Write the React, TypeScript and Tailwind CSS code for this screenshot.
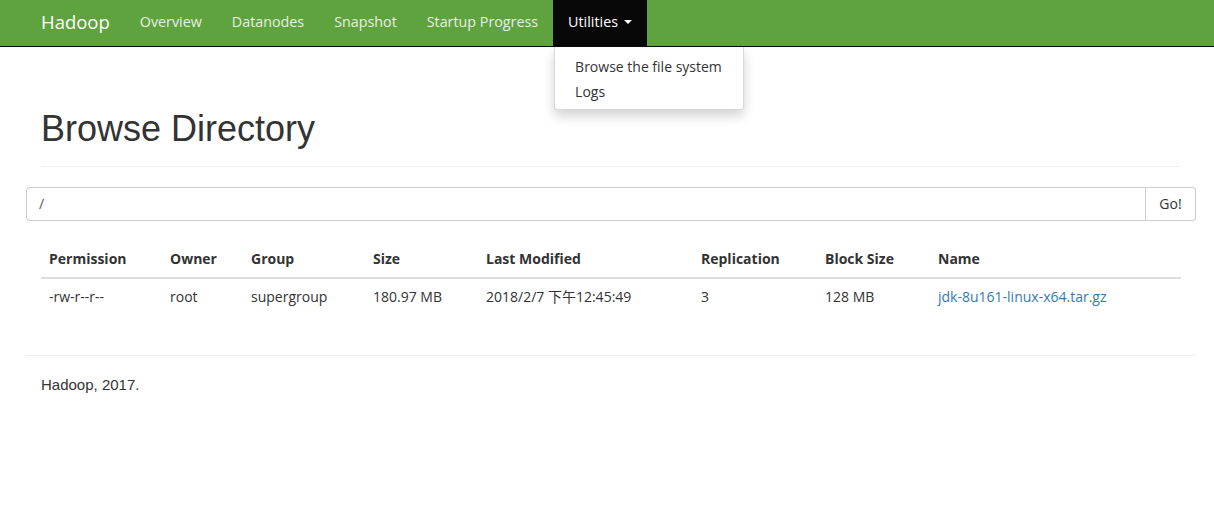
import React from "react";

export default function App() {
  const navItems = ["Overview", "Datanodes", "Snapshot", "Startup Progress"];
  return (
    <div className="min-h-[510px] bg-white text-[#333] text-[14px] leading-[20px] font-['Open_Sans','Noto_Sans_CJK_SC',sans-serif]">
      {/* Navbar */}
      <div className="h-[47px] bg-[#5fa33e] border-b border-[#080808]">
        <div className="w-[1170px] ml-[26px] flex h-[46px] items-stretch">
          <div className="px-[15px] flex items-center text-[18.5px] text-white pb-[2px]">Hadoop</div>
          {navItems.map((n) => (
            <div key={n} className="px-[15px] flex items-center text-[14.3px] text-[#e8efe3] pb-[2px]">
              {n}
            </div>
          ))}
          <div className="relative">
            <div className="h-[46px] px-[15px] pb-[2px] flex items-center bg-[#080808] text-white text-[14.3px]">
              Utilities
              <span className="ml-[6px] inline-block w-0 h-0 border-l-[4px] border-r-[4px] border-t-[4px] border-l-transparent border-r-transparent border-t-white" />
            </div>
            <div className="absolute left-[1px] top-[47px] w-[190px] bg-white border border-[rgba(0,0,0,0.15)] border-t-0 rounded-b-[4px] shadow-[0_6px_12px_rgba(0,0,0,0.175)] pt-[7px] pb-[5px] z-10">
              <div className="px-[20px] leading-[25px] text-[#333] whitespace-nowrap">Browse the file system</div>
              <div className="px-[20px] leading-[25px] text-[#333]">Logs</div>
            </div>
          </div>
        </div>
      </div>

      {/* Container */}
      <div className="w-[1170px] ml-[26px]">
        <div className="mx-[15px] mt-[62px] mb-[20px] pb-[7px] border-b border-[#eee]">
          <h1 className="text-[36px] leading-[40px] font-['Liberation_Sans',Arial,sans-serif] font-normal mb-[10px] text-[#333]">
            Browse Directory
          </h1>
        </div>

        <div className="flex h-[34px]">
          <div className="flex-1 border border-[#ccc] rounded-l-[4px] px-[12px] flex items-center text-[14px] text-[#555]">
            /
          </div>
          <div className="w-[50px] border border-l-0 border-[#ccc] rounded-r-[4px] flex items-center justify-center text-[14px] text-[#333]">
            Go!
          </div>
        </div>

        <div className="mx-[15px] mt-[20px]">
          <table className="w-full table-fixed border-collapse text-left">
            <colgroup>
              <col className="w-[121px]" />
              <col className="w-[81px]" />
              <col className="w-[122px]" />
              <col className="w-[113px]" />
              <col className="w-[215px]" />
              <col className="w-[124px]" />
              <col className="w-[113px]" />
              <col />
            </colgroup>
            <thead>
              <tr className="border-b-2 border-[#ddd]">
                {["Permission", "Owner", "Group", "Size", "Last Modified", "Replication", "Block Size", "Name"].map((h) => (
                  <th key={h} className="p-[8px] font-bold leading-[20px] whitespace-nowrap">
                    {h}
                  </th>
                ))}
              </tr>
            </thead>
            <tbody>
              <tr>
                <td className="p-[8px] whitespace-nowrap">-rw-r--r--</td>
                <td className="p-[8px]">root</td>
                <td className="p-[8px]">supergroup</td>
                <td className="p-[8px] whitespace-nowrap">180.97 MB</td>
                <td className="p-[8px] whitespace-nowrap">2018/2/7 下午12:45:49</td>
                <td className="p-[8px]">3</td>
                <td className="p-[8px] whitespace-nowrap">128 MB</td>
                <td className="p-[8px] whitespace-nowrap text-[#337ab7]">jdk-8u161-linux-x64.tar.gz</td>
              </tr>
            </tbody>
          </table>
        </div>

        <div className="mt-[40px] border-t border-[#eee] pt-[19px] px-[15px]">
          <p className="font-['Liberation_Sans',Arial,sans-serif] text-[15px] leading-[20px]">Hadoop, 2017.</p>
        </div>
      </div>
    </div>
  );
}
